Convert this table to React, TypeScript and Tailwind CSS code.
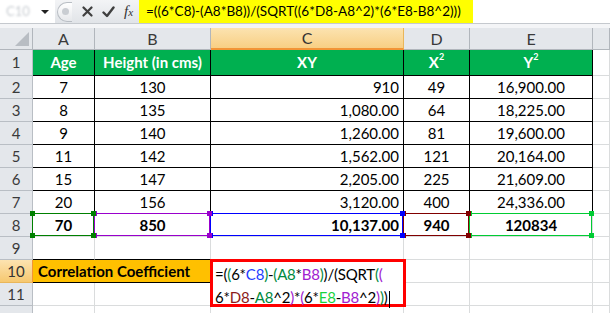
import React from 'react';

const data = [
  ['7', '130', '910', '49', '16,900.00'],
  ['8', '135', '1,080.00', '64', '18,225.00'],
  ['9', '140', '1,260.00', '81', '19,600.00'],
  ['11', '142', '1,562.00', '121', '20,164.00'],
  ['15', '147', '2,205.00', '225', '21,609.00'],
  ['20', '156', '3,120.00', '400', '24,336.00'],
];

const totals = ['70', '850', '10,137.00', '940', '120834'];

// reference highlight boxes on row 8 (formula precedents)
const refBoxes = [
  { border: 'border-[#008000]', sq: 'bg-[#008000]', z: 'z-[5]' },
  { border: 'border-[#9900CC]', sq: 'bg-[#9900CC]', z: 'z-[4]' },
  { border: 'border-[#0000FF]', sq: 'bg-[#0000FF]', z: 'z-[3]' },
  { border: 'border-[#800000]', sq: 'bg-[#800000]', z: 'z-[2]' },
  { border: 'border-[#00CC33]', sq: 'bg-[#00CC33]', z: 'z-[1]' },
];

const align = ['justify-center', 'justify-center', 'justify-end pr-[4px]', 'justify-center', 'justify-center'];

function RowHead({ n, active = false }: { n?: number; active?: boolean }) {
  return (
    <div
      className={`flex items-center justify-center border-r border-b text-[15px] ${
        active
          ? 'bg-gradient-to-b from-[#FCE3B0] to-[#F6C86F] border-b-[#E9B65A] border-r-[#F29436] text-[#333]'
          : 'bg-[#E4E7EB] border-[#B9BEC4] text-[#3A3A3A]'
      }`}
    >
      {n}
    </div>
  );
}

function Blank({ className = '' }: { className?: string }) {
  return <div className={`border-r border-b border-[#DADCDD] ${className}`} />;
}

function RefBox({ i }: { i: number }) {
  const b = refBoxes[i];
  return (
    <div className={`pointer-events-none absolute -left-px -top-px right-0 bottom-0 border ${b.border} ${b.z}`}>
      <span className={`absolute -left-[3px] -top-[3px] w-[5px] h-[5px] ${b.sq}`} />
      <span className={`absolute -right-[3px] -top-[3px] w-[5px] h-[5px] ${b.sq}`} />
      <span className={`absolute -left-[3px] -bottom-[3px] w-[5px] h-[5px] ${b.sq}`} />
      <span className={`absolute -right-[3px] -bottom-[3px] w-[5px] h-[5px] ${b.sq}`} />
    </div>
  );
}

function FormulaBar() {
  return (
    <div className="flex h-[24px] border-b border-[#C5C9CE] bg-white">
      {/* name box */}
      <div className="flex w-[55px] items-center justify-between pl-[6px] pr-[6px] bg-white">
        <span className="text-[13px] text-[#C9CDD2] blur-[1px]">C10</span>
        <span className="mt-px h-0 w-0 border-x-[4px] border-t-[4px] border-x-transparent border-t-[#222]" />
      </div>
      {/* buttons */}
      <div className="flex w-[84px] items-center bg-gradient-to-b from-[#F3F4F6] to-[#E1E4E8]">
        <div className="ml-[2px] flex h-[20px] w-[15px] items-center justify-center rounded-l-full border border-r-0 border-[#B9BEC4] bg-gradient-to-b from-white to-[#E6E8EB]">
          <span className="h-[7px] w-[7px] rounded-full bg-[#C9CDD2]" />
        </div>
        <svg className="ml-[10px]" width="11" height="11" viewBox="0 0 11 11">
          <path d="M1.5 1.5 L9.5 9.5 M9.5 1.5 L1.5 9.5" stroke="#3F3F3F" strokeWidth="2.2" strokeLinecap="round" />
        </svg>
        <svg className="ml-[9px]" width="13" height="12" viewBox="0 0 13 12">
          <path d="M1.5 6.5 L5 10 L11.5 1.5" stroke="#3F3F3F" strokeWidth="2.4" fill="none" strokeLinecap="round" strokeLinejoin="round" />
        </svg>
        <span className="ml-[9px] text-[15px] italic text-[#333] [font-family:'Liberation_Serif',serif] leading-none">
          f<span className="text-[11px]">x</span>
        </span>
      </div>
      {/* formula text */}
      <div className="flex w-[334px] items-center bg-[#FFFF00] pl-[7px] text-[13.5px] whitespace-nowrap">
        =((6*C8)-(A8*B8))/(SQRT((6*D8-A8^2)*(6*E8-B8^2)))
      </div>
      <div className="flex-1 bg-white" />
    </div>
  );
}

function Sheet() {
  const colHead = (label: string, active = false) => (
    <div
      key={label}
      className={`flex items-center justify-center border-r border-b text-[16px] ${
        active
          ? 'bg-gradient-to-b from-[#FCE3B0] to-[#F8CF83] border-r-[#E9B65A] border-b-2 border-b-[#F29436] text-[#333]'
          : 'bg-[#E4E7EB] border-[#B1B6BC] text-[#3A3A3A]'
      }`}
    >
      {label}
    </div>
  );

  return (
    <div className="grid grid-cols-[33px_62px_116px_193px_66px_123px_1fr] grid-rows-[22px_26px_repeat(11,23px)] text-[15px]">
      {/* column headers */}
      <div className="relative border-r border-b border-[#B1B6BC] bg-[#E4E7EB]">
        <svg className="absolute right-[3px] bottom-[3px]" width="14" height="14" viewBox="0 0 14 14">
          <path d="M14 0 L14 14 L0 14 Z" fill="#B8BDC3" />
        </svg>
      </div>
      {colHead('A')}
      {colHead('B')}
      {colHead('C', true)}
      {colHead('D')}
      {colHead('E')}
      {colHead('')}

      {/* row 1 */}
      <RowHead n={1} />
      {['Age', 'Height (in cms)', 'XY'].map((t) => (
        <div key={t} className="flex items-center justify-center border-r border-b border-black bg-[#00B050] font-bold text-white">
          {t}
        </div>
      ))}
      <div className="flex items-center justify-center border-r border-b border-black bg-[#00B050] font-bold text-white">
        X<sup className="text-[9px] -top-[6px]">2</sup>
      </div>
      <div className="flex items-center justify-center border-r border-b border-black bg-[#00B050] font-bold text-white">
        Y<sup className="text-[9px] -top-[6px]">2</sup>
      </div>
      <Blank />

      {/* rows 2-7 */}
      {data.map((row, r) => (
        <React.Fragment key={r}>
          <RowHead n={r + 2} />
          {row.map((v, c) => (
            <div key={c} className={`flex items-center border-r border-b border-black ${align[c]}`}>
              {v}
            </div>
          ))}
          <Blank />
        </React.Fragment>
      ))}

      {/* row 8 totals */}
      <RowHead n={8} />
      {totals.map((v, c) => (
        <div key={c} className={`relative flex items-center border-r border-b border-[#DADCDD] font-bold ${align[c]}`}>
          {v}
          <RefBox i={c} />
        </div>
      ))}
      <Blank />

      {/* row 9 */}
      <RowHead n={9} />
      <Blank className="border-b-black" />
      <Blank className="border-b-black" />
      <Blank />
      <Blank />
      <Blank />
      <Blank />

      {/* row 10 */}
      <RowHead n={10} active />
      <div className="col-span-2 flex items-center border-r border-b border-black bg-[#FFC000] pl-[5px] font-bold">
        Correlation Coefficient
      </div>
      <div className="relative row-span-2 border-r border-b border-[#DADCDD]">
        <div className="absolute -left-px -top-px -right-[3px] -bottom-[2px] z-10 border-[3px] border-[#FF0000] bg-white pl-[2px] pt-[1px] leading-[23px] tracking-[-0.2px] whitespace-nowrap">
          <div>
            =(<span className="text-[#008A3E]">(</span>6*<span className="text-[#1F3DFF]">C8</span>
            <span className="text-[#008A3E]">)</span>-<span className="text-[#008A3E]">(A8</span>*
            <span className="text-[#A020D0]">B8</span>
            <span className="text-[#008A3E]">)</span>)/(SQRT<span className="text-[#008A3E]">(</span>
            <span className="text-[#A020D0]">(</span>
          </div>
          <div>
            6*<span className="text-[#8B1A1A]">D8</span>-<span className="text-[#008A3E]">A8</span>^2
            <span className="text-[#A020D0]">)</span>*<span className="text-[#A020D0]">(</span>6*
            <span className="text-[#19D23E]">E8</span>-<span className="text-[#A020D0]">B8</span>^2
            <span className="text-[#A020D0]">)</span>
            <span className="text-[#008A3E]">)</span>)
            <span className="ml-px inline-block h-[17px] w-px bg-black align-middle" />
          </div>
        </div>
      </div>
      <Blank />
      <Blank />
      <Blank />

      {/* row 11 */}
      <RowHead n={11} />
      <Blank />
      <Blank />
      <Blank />
      <Blank />
      <Blank />

      {/* row 12, only its top edge shows */}
      <RowHead />
      <Blank />
      <Blank />
      <Blank />
      <Blank />
      <Blank />
      <Blank />
    </div>
  );
}

export default function App() {
  return (
    <div className="h-[313px] w-[610px] overflow-hidden bg-white text-black [font-family:Lato,sans-serif]">
      <FormulaBar />
      <div className="h-[4px] bg-[#F4F5F7]" />
      <Sheet />
    </div>
  );
}
